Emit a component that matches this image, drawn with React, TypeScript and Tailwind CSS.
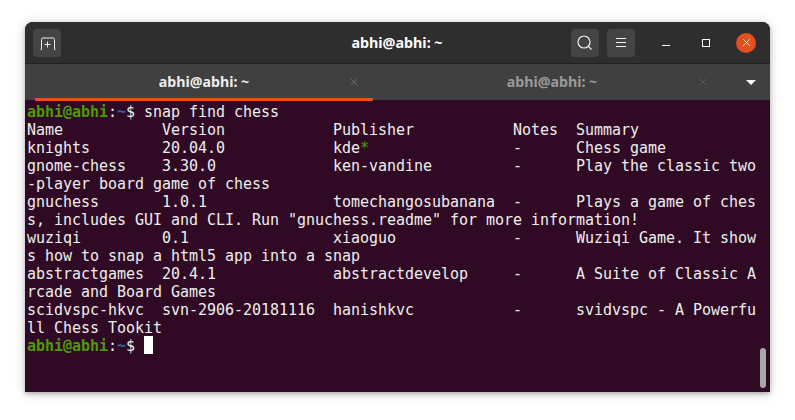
import { X } from "lucide-react";

function Prompt() {
  return (
    <>
      <span className="font-bold text-[#4e9a06]">abhi@abhi</span>
      <span>:</span>
      <span className="font-bold text-[#3465a4]">~</span>
      <span>$ </span>
    </>
  );
}

const lines = [
  "Name           Version            Publisher           Notes  Summary",
  "knights        20.04.0            kde*                -      Chess game",
  "gnome-chess    3.30.0             ken-vandine         -      Play the classic two",
  "-player board game of chess",
  "gnuchess       1.0.1              tomechangosubanana  -      Plays a game of ches",
  's, includes GUI and CLI. Run "gnuchess.readme" for more information!',
  "wuziqi         0.1                xiaoguo             -      Wuziqi Game. It show",
  "s how to snap a html5 app into a snap",
  "abstractgames  20.4.1             abstractdevelop     -      A Suite of Classic A",
  "rcade and Board Games",
  "scidvspc-hkvc  svn-2906-20181116  hanishkvc           -      svidvspc - A Powerfu",
  "ll Chess Tookit",
];

function Line({ text }: { text: string }) {
  const star = text.indexOf("kde*");
  if (star < 0) return <div className="h-[18px]">{text}</div>;
  return (
    <div className="h-[18px]">
      {text.slice(0, star + 3)}
      <span className="text-[#4e9a06]">*</span>
      {text.slice(star + 4)}
    </div>
  );
}

export default function App() {
  return (
    <div className="w-[795px] h-[420px] bg-white pt-[22px] pl-[25px] overflow-hidden">
      <div className="w-[745px] h-[370px] flex flex-col rounded-t-[8px] shadow-[0_2px_4px_rgba(0,0,0,0.25),0_1px_13px_rgba(0,0,0,0.16)] bg-[#300a24]">
        {/* header bar */}
        <div className="h-[42px] shrink-0 flex items-center rounded-t-[8px] bg-[#2e2e2e] border-b border-[#202020] pl-2 pr-[14px] text-white">
          <div className="flex-1 flex">
            <button className="w-7 h-7 rounded-[4px] bg-[#444444]">
              <svg width="28" height="28" viewBox="0 0 28 28" fill="none" stroke="#eeeeee" strokeWidth="1">
                <path d="M7.5 20.5 H8.5 V10.5 Q8.5 9 10 9 H20 Q21.5 9 21.5 10.5 V20.5 H22.5" />
                <path d="M14.5 12.5 V18.5 M11.5 15.5 H17.5" />
              </svg>
            </button>
          </div>
          <div className="text-center text-[14.3px] font-bold font-['Noto_Sans',sans-serif] pl-[5px]">abhi@abhi: ~</div>
          <div className="flex-1 flex items-center justify-end">
            <button className="w-7 h-7 rounded-[4px] bg-[#444444]">
              <svg width="28" height="28" viewBox="0 0 28 28" fill="none" stroke="#eeeeee" strokeWidth="1.2">
                <circle cx="13" cy="13" r="6" />
                <path d="M17.5 17.5 L20.5 20.5" />
              </svg>
            </button>
            <button className="w-7 h-7 ml-2 rounded-[4px] bg-[#444444]">
              <svg width="28" height="28" viewBox="0 0 28 28" fill="none" stroke="#eeeeee" strokeWidth="1">
                <path d="M9 9.5 H19 M9 13.5 H19 M9 17.5 H19" />
              </svg>
            </button>
            <div className="w-2 h-px bg-white ml-[27px] mt-[5px]" />
            <div className="w-2 h-2 border border-white ml-[32px]" />
            <div className="w-5 h-5 rounded-full bg-[#e2501f] ml-[26px] flex items-center justify-center">
              <X size={13} strokeWidth={1.4} className="text-white" />
            </div>
          </div>
        </div>
        {/* tabs */}
        <div className="h-[36px] shrink-0 flex bg-[#404040] font-['Noto_Sans',sans-serif] text-[14.2px] font-bold">
          <div className="ml-[10px] w-[338px] h-full flex items-center relative">
            <span className="flex-1 text-center text-[#eeeeee]">abhi@abhi: ~</span>
            <X size={12} strokeWidth={1} className="text-[#888888] absolute right-[13px] top-[12px]" />
            <div className="absolute left-0 right-0 -bottom-px h-[3px] bg-[#e2501f]" />
          </div>
          <div className="w-[340px] h-full flex items-center relative">
            <span className="flex-1 text-center text-[#9a9a9a] pl-[18px]">abhi@abhi: ~</span>
            <X size={12} strokeWidth={1} className="text-[#777777] absolute right-[4px] top-[12px]" />
          </div>
          <div className="flex-1 flex items-center justify-end pr-[14px]">
            <div className="w-0 h-0 border-l-[5px] border-r-[5px] border-t-[5px] border-l-transparent border-r-transparent border-t-white" />
          </div>
        </div>
        {/* terminal */}
        <div className="flex-1 relative pl-[2px] pt-[3px] whitespace-pre text-[#eeeeec] text-[15px] tracking-[-0.03px] leading-[18px] font-['DejaVu_Sans_Mono',monospace]">
          <div className="h-[18px]"><Prompt />snap find chess</div>
          {lines.map((l, i) => (
            <Line key={i} text={l} />
          ))}
          <div className="h-[18px] flex">
            <span><Prompt /></span>
            <span className="w-[9px] h-[18px] -mt-px bg-white" />
          </div>
          <div className="absolute right-[4px] bottom-[4px] w-[6px] h-[40px] rounded-[3px] bg-[#a8a8a8]" />
        </div>
      </div>
    </div>
  );
}
